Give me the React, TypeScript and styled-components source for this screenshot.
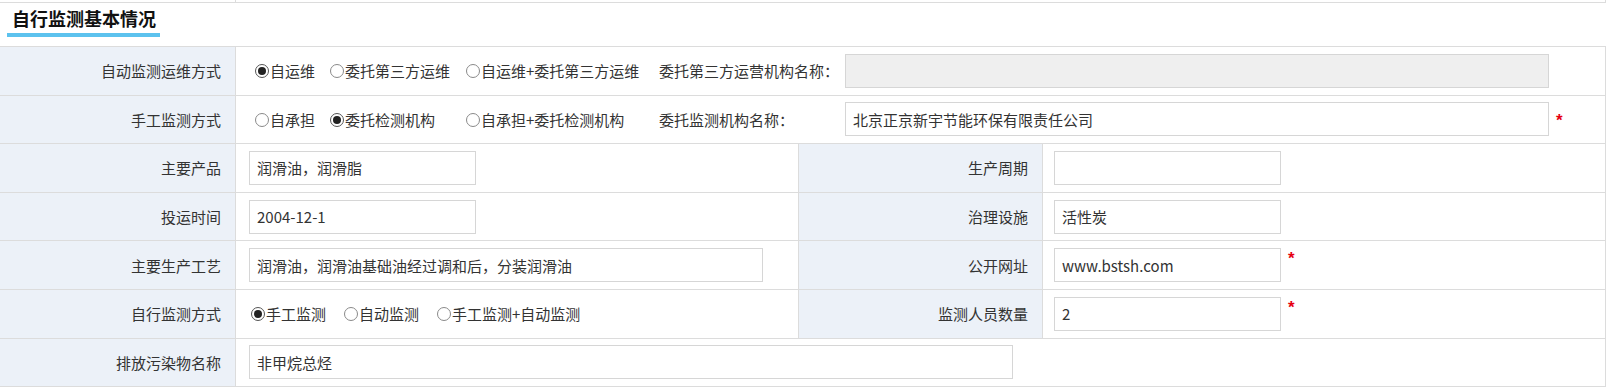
import React from 'react';
import styled, { createGlobalStyle } from 'styled-components';

const GlobalStyle = createGlobalStyle`
  html, body {
    margin: 0;
    padding: 0;
    background: #fff;
  }
  body {
    font-family: "Microsoft YaHei", "Noto Sans CJK SC", "Noto Sans", sans-serif;
    color: #333;
  }
`;

const Page = styled.div`
  width: 1606px;
`;

// bottom edge of the table above this section
const PrevTail = styled.div`
  height: 2px;
  border-bottom: 1px solid #dcdcdc;
  border-right: 1px solid #dcdcdc;
  display: grid;
  grid-template-columns: 236px 1fr;
`;

const PrevTailCell = styled.div`
  border-right: 1px solid #dcdcdc;
`;

const Header = styled.div`
  padding: 3px 0 0 7px;
  height: 43px;
  box-sizing: border-box;
`;

const Title = styled.span`
  display: inline-block;
  font-size: 18px;
  font-weight: bold;
  line-height: 24px;
  color: #111;
  padding: 0 4px 3px 5px;
  border-bottom: 4px solid #5cc2ee;
`;

const Table = styled.div`
  display: grid;
  grid-template-columns: 236px 563px 244px 563px;
  grid-auto-rows: 48.6px;
  border-top: 1px solid #dcdcdc;
  font-size: 15px;
`;

const Label = styled.div`
  box-sizing: border-box;
  display: flex;
  align-items: center;
  justify-content: flex-end;
  padding-right: 14px;
  background: #ecf1f8;
  border-right: 1px solid #dcdcdc;
  border-bottom: 1px solid #dcdcdc;
  white-space: nowrap;
`;

const Value = styled.div<{ $span?: number; $inset?: number }>`
  box-sizing: border-box;
  grid-column: span ${p => p.$span || 1};
  display: flex;
  align-items: center;
  padding-left: ${p => p.$inset ?? 13}px;
  border-right: 1px solid #dcdcdc;
  border-bottom: 1px solid #dcdcdc;
  white-space: nowrap;
`;

const OptionsGrid = styled.div`
  display: grid;
  grid-template-columns: 75px 136px 193px 186px 704px auto;
  align-items: center;
  width: 100%;
`;

const RadioRow = styled.div`
  display: flex;
  align-items: center;
  gap: 18px;
`;

const RadioLabel = styled.label`
  display: inline-flex;
  align-items: center;
  cursor: pointer;
`;

const RadioDot = styled.span<{ $checked?: boolean }>`
  width: 14px;
  height: 14px;
  box-sizing: border-box;
  border-radius: 50%;
  border: 1px solid ${p => (p.$checked ? '#555' : '#8a8a8a')};
  background: #fff;
  margin: 1px 1px 0 0;
  display: inline-flex;
  align-items: center;
  justify-content: center;
  &::after {
    content: '';
    width: 8px;
    height: 8px;
    border-radius: 50%;
    background: ${p => (p.$checked ? '#222' : 'transparent')};
  }
`;

const Input = styled.input<{ $w: number }>`
  width: ${p => p.$w}px;
  height: 34px;
  box-sizing: border-box;
  border: 1px solid #d6d6d6;
  padding: 0 7px;
  font: inherit;
  font-size: 15px;
  color: #333;
  background: #fff;
  outline: none;
  &:disabled {
    background: #efefef;
  }
`;

const Star = styled.span<{ $lift: number }>`
  align-self: flex-start;
  margin-left: 7px;
  margin-top: ${p => p.$lift}px;
  color: #e60012;
  font-family: "Liberation Sans", sans-serif;
  font-weight: bold;
  font-size: 17px;
  line-height: 1;
`;

const StarWrap = styled.div`
  display: flex;
  align-items: center;
  height: 34px;
`;

const Radio = ({ text, checked }: { text: string; checked?: boolean }) => (
  <RadioLabel>
    <RadioDot $checked={checked} />
    {text}
  </RadioLabel>
);

const App: React.FC = () => {
  return (
    <Page>
      <GlobalStyle />
      <PrevTail>
        <PrevTailCell />
      </PrevTail>
      <Header>
        <Title>自行监测基本情况</Title>
      </Header>
      <Table>
        <Label>自动监测运维方式</Label>
        <Value $span={3} $inset={19}>
          <OptionsGrid>
            <Radio text="自运维" checked />
            <Radio text="委托第三方运维" />
            <Radio text="自运维+委托第三方运维" />
            <span>委托第三方运营机构名称：</span>
            <Input $w={704} disabled />
          </OptionsGrid>
        </Value>

        <Label>手工监测方式</Label>
        <Value $span={3} $inset={19}>
          <OptionsGrid>
            <Radio text="自承担" />
            <Radio text="委托检测机构" checked />
            <Radio text="自承担+委托检测机构" />
            <span>委托监测机构名称：</span>
            <Input $w={704} defaultValue="北京正京新宇节能环保有限责任公司" />
            <StarWrap>
              <Star $lift={10}>*</Star>
            </StarWrap>
          </OptionsGrid>
        </Value>

        <Label>主要产品</Label>
        <Value>
          <Input $w={227} defaultValue="润滑油，润滑脂" />
        </Value>
        <Label>生产周期</Label>
        <Value $inset={11}>
          <Input $w={227} />
        </Value>

        <Label>投运时间</Label>
        <Value>
          <Input $w={227} defaultValue="2004-12-1" />
        </Value>
        <Label>治理设施</Label>
        <Value $inset={11}>
          <Input $w={227} defaultValue="活性炭" />
        </Value>

        <Label>主要生产工艺</Label>
        <Value>
          <Input $w={514} defaultValue="润滑油，润滑油基础油经过调和后，分装润滑油" />
        </Value>
        <Label>公开网址</Label>
        <Value $inset={11}>
          <Input $w={227} defaultValue="www.bstsh.com" />
          <StarWrap>
            <Star $lift={2}>*</Star>
          </StarWrap>
        </Value>

        <Label>自行监测方式</Label>
        <Value $inset={15}>
          <RadioRow>
            <Radio text="手工监测" checked />
            <Radio text="自动监测" />
            <Radio text="手工监测+自动监测" />
          </RadioRow>
        </Value>
        <Label>监测人员数量</Label>
        <Value $inset={11}>
          <Input $w={227} defaultValue="2" />
          <StarWrap>
            <Star $lift={2}>*</Star>
          </StarWrap>
        </Value>

        <Label>排放污染物名称</Label>
        <Value $span={3}>
          <Input $w={764} defaultValue="非甲烷总烃" />
        </Value>
      </Table>
    </Page>
  );
};

export default App;
